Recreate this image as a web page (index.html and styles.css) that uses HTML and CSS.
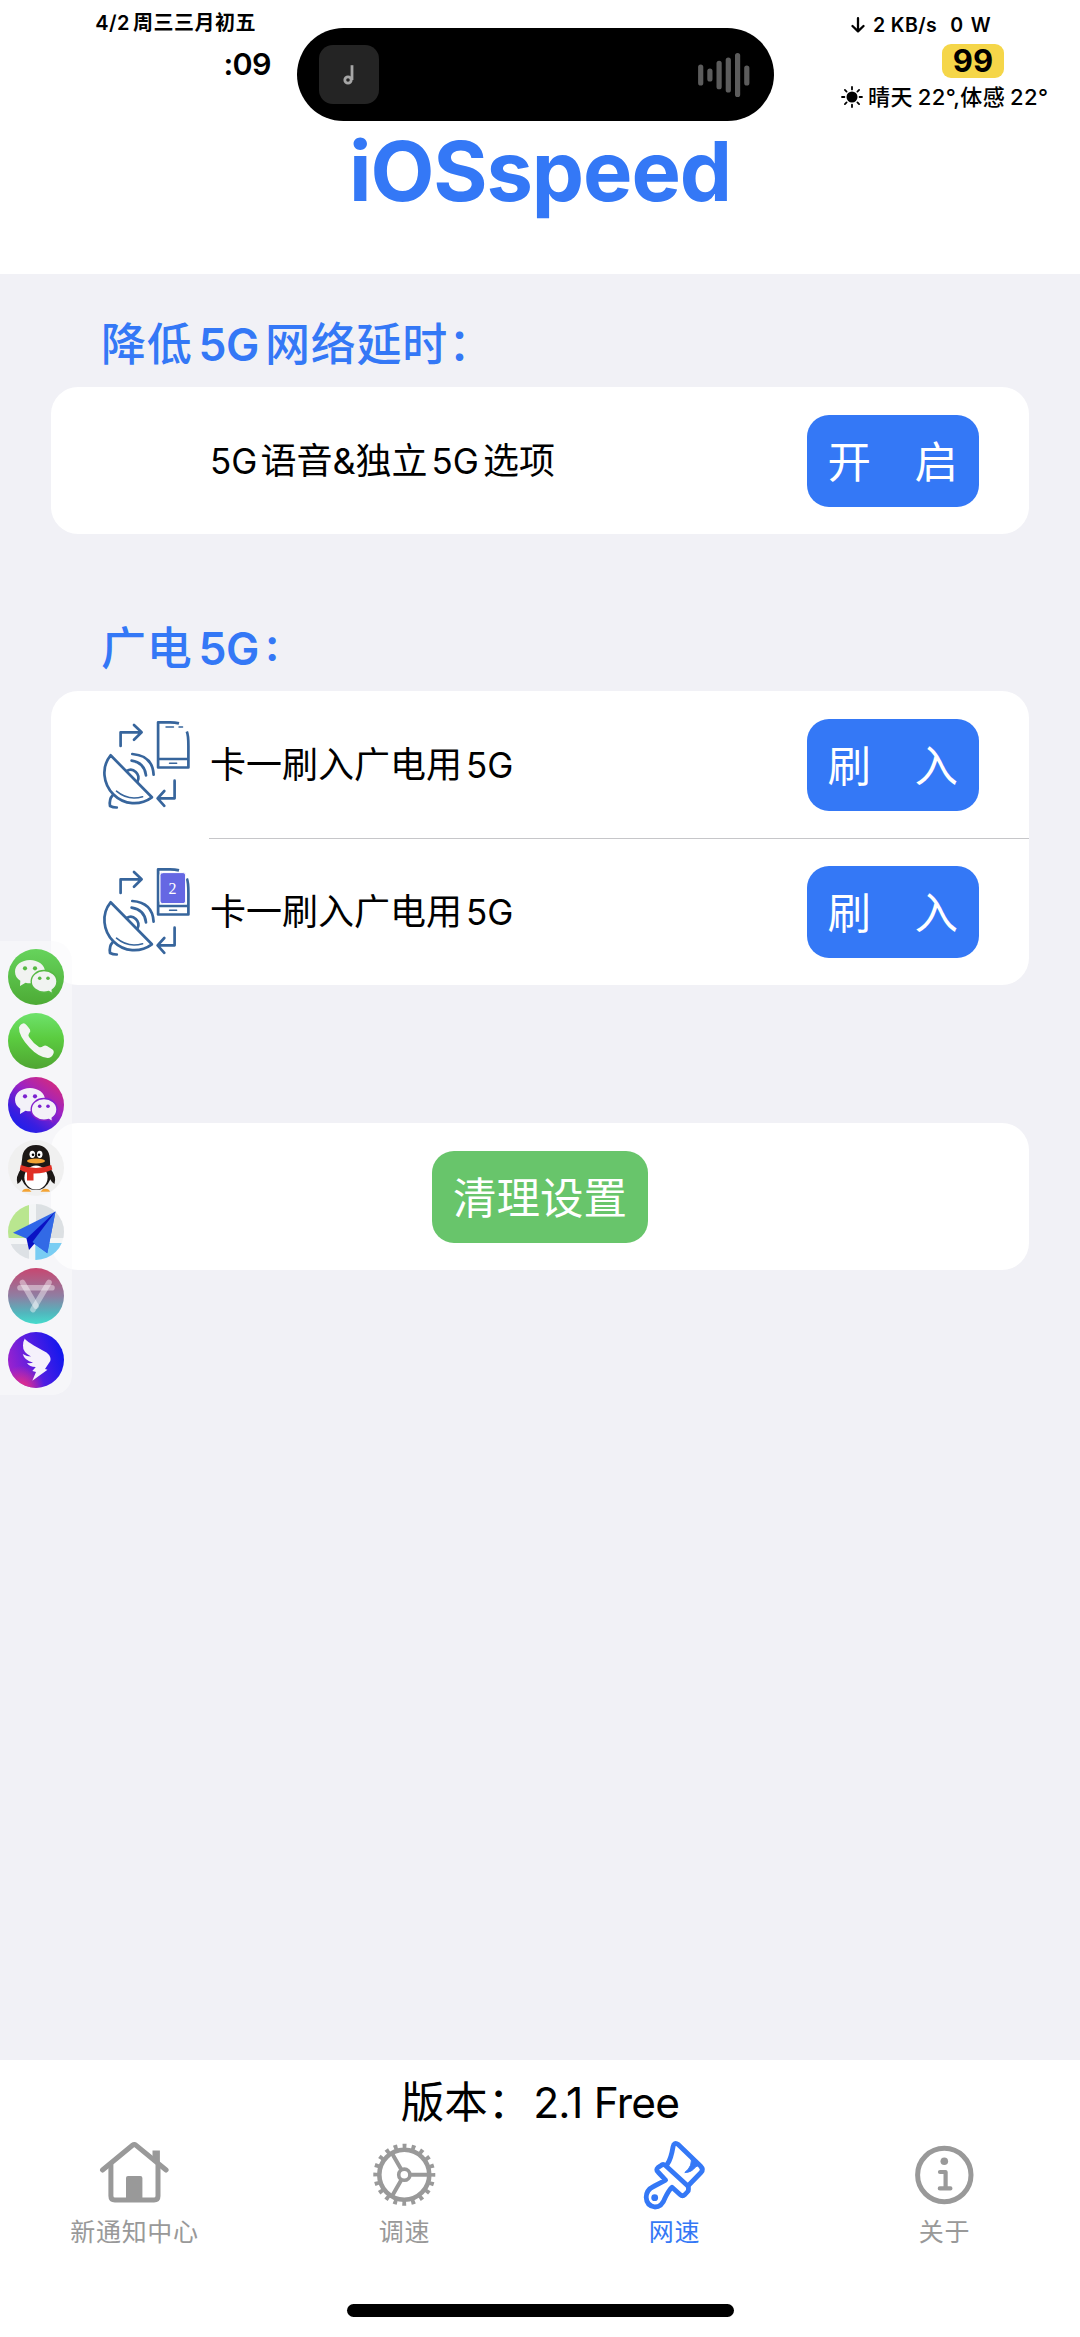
FILE: index.html
```html
<!DOCTYPE html>
<html lang="zh-CN">
<head>
    <meta charset="UTF-8">
    <title>iOSspeed</title>
    <link rel="stylesheet" href="styles.css">
</head>
<body>
    <header class="header">
        <div class="status-bar">
            <div class="status-left">
                <div class="date"><span class="day">4/2</span>周三三月初五</div>
                <div class="time">:09</div>
            </div>
            <div class="island">
                <div class="artwork">
                    <svg width="12" height="22" viewBox="0 0 12 22" fill="none" stroke="#a6a6a6">
                        <circle cx="5" cy="16" r="3.2" stroke-width="2.8"/>
                        <path d="M9 1.2V16" stroke-width="2.8"/>
                    </svg>
                </div>
                <svg width="52" height="46" viewBox="0 0 52 46" stroke="#5c5c5c" stroke-width="5.2" stroke-linecap="round">
                    <path d="M2.7 15V31M11.9 19V27M21.1 11.3V34.7M30.3 8V38M39.6 3.5V42.5M48.8 16V31"/>
                </svg>
            </div>
            <div class="status-right">
                <div class="net">
                    <svg width="14" height="16" viewBox="0 0 14 16" fill="none" stroke="#000" stroke-width="2.3" stroke-linecap="round" stroke-linejoin="round">
                        <path d="M7 1.2V14M1.5 9L7 14.3L12.5 9"/>
                    </svg>
                    <span>2 KB/s</span>
                    <span class="watt">0 W</span>
                </div>
                <div class="battery">99</div>
                <div class="weather">
                    <svg width="22" height="22" viewBox="0 0 22 22" stroke="#000" stroke-width="1.8" stroke-linecap="round">
                        <circle cx="11" cy="11" r="4.6"/>
                        <path d="M11 1V3.4M11 18.6V21M1 11H3.4M18.6 11H21M3.9 3.9L5.6 5.6M16.4 16.4L18.1 18.1M3.9 18.1L5.6 16.4M16.4 5.6L18.1 3.9"/>
                    </svg>
                    <span>晴天<span class="deg">22°,</span>体感<span class="deg">22°</span></span>
                </div>
            </div>
        </div>
        <h1>iOSspeed</h1>
    </header>

    <main>
        <h2>降低<span class="num">5G</span>网络延时：</h2>
        <div class="card">
            <div class="row">
                <div class="row-icon"></div>
                <div class="row-body">
                    <span class="label"><span class="lead">5G</span>语音&amp;独立<span class="num">5G</span>选项</span>
                    <button class="button primary">开　启</button>
                </div>
            </div>
        </div>

        <h2>广电<span class="num">5G</span><span class="colon">:</span></h2>
        <div class="card">
            <div class="row">
                <div class="row-icon">
                    <svg width="88" height="90" viewBox="0 0 88 90" fill="none" stroke="#37659c" stroke-width="2.7" stroke-linejoin="round" stroke-linecap="round">
                        <g id="dish">
                            <path d="M18.6 26V12.3H39M32 5L39.6 12.3L32 19.7"/>
                            <path d="M77 3.4Q73 2.3 68 2.3H56.1V47.5H86.4V26Q86.4 15 84.8 11.5M56.1 39H86.4" stroke-linecap="butt"/>
                            <path d="M64 7H71.5M77 7H80.6M67.5 43.3H74.7" stroke-width="1.4"/>
                            <path d="M8.6 35.3L49.9 77.3C38 86 22 85 11.5 74.5C1 64 -1 47 8.6 35.3Z"/>
                            <path d="M14.5 71.2Q26 81 40.6 76.7" stroke-width="1.6"/>
                            <path d="M24.8 51C31 47 39 54 35.5 61.5"/>
                            <path d="M29.6 40.7Q42.5 42.5 44 55.3M30.3 34Q50.5 35.5 51.6 54.6"/>
                            <path d="M10.5 75.5Q7 79 8 86Q11 87.6 14.8 87.5"/>
                            <path d="M72.6 60.7V78.3H56M62.3 71L55.6 78.3L62.3 85.8"/>
                        </g>
                    </svg>
                </div>
                <div class="row-body">
                    <span class="label">卡一刷入广电用<span class="num">5G</span></span>
                    <button class="button primary">刷　入</button>
                </div>
            </div>
            <div class="row">
                <div class="row-icon">
                    <svg width="88" height="90" viewBox="0 0 88 90" fill="none" stroke="#37659c" stroke-width="2.7" stroke-linejoin="round" stroke-linecap="round">
                        <use href="#dish"/>
                        <rect x="58" y="5.6" width="25.6" height="31" rx="2.5" fill="#6567e3" stroke="#fff" stroke-width="1"/>
                        <text class="sim" x="70.6" y="27" stroke="none">2</text>
                    </svg>
                </div>
                <div class="row-body">
                    <span class="label">卡一刷入广电用<span class="num">5G</span></span>
                    <button class="button primary">刷　入</button>
                </div>
            </div>
        </div>

        <div class="card clean-card">
            <button class="button success">清理设置</button>
        </div>
    </main>

    <footer>
        <div class="version">版本：<span>2.1 Free</span></div>
        <nav class="tabs">
            <a class="tab">
                <svg width="72" height="74" viewBox="0 0 72 74" fill="none" stroke="currentColor" stroke-width="5" stroke-linecap="round" stroke-linejoin="round">
                    <path d="M57.2 24V12.5" stroke-width="7.4" stroke-linecap="butt"/>
                    <path d="M3.5 32L33.5 7.3Q35.3 5.8 37.1 7.3L67.1 32"/>
                    <path d="M11.9 27V58Q11.9 62 15.9 62H55Q59 62 59 58V27"/>
                    <rect x="27" y="38" width="16.4" height="24" rx="2" fill="currentColor" stroke="none"/>
                </svg>
                <span>新通知中心</span>
            </a>
            <a class="tab">
                <svg width="72" height="74" viewBox="0 0 72 74" fill="none" stroke="currentColor" stroke-width="4">
                    <circle cx="35.3" cy="36.7" r="25" stroke-width="4.6"/>
                    <circle cx="35.3" cy="36.7" r="28.2" stroke-width="5.6" stroke-dasharray="3.8 5.06" stroke-dashoffset="1.9"/>
                    <circle cx="35.3" cy="36.7" r="5.6" stroke-width="3.6"/>
                    <path d="M42 36.7H60M32 31L22.8 15M32 42.4L22.8 58.4"/>
                </svg>
                <span>调速</span>
            </a>
            <a class="tab active">
                <svg width="72" height="74" viewBox="0 0 72 74" fill="none" stroke="currentColor" stroke-width="4.8" stroke-linecap="round" stroke-linejoin="round">
                    <path d="M28.4 26Q32 21 34 9Q35 3.5 39.2 6.5L61.5 28Q65 31.5 62 34.5L49.4 47.5"/>
                    <path d="M22 27.5Q24 25.4 26.5 27.5L48.6 47.8Q50 49.5 49.2 53L46 56.5Q43.5 58.8 41 56.5L33 49.3Q30 52 26 60Q23 69 15.8 69Q7.5 67.5 7.2 59.3Q7.3 52 14.5 48.5L26.6 42.2L19 34Q16.5 31.8 19 29.5Z"/>
                    <path d="M51.8 18.5Q54.5 28 45.8 34.5Q52.5 34.5 56.5 29L60 27Z" fill="currentColor" stroke-width="1"/>
                    <circle cx="15.7" cy="59.7" r="3.4" fill="currentColor" stroke="none"/>
                </svg>
                <span>网速</span>
            </a>
            <a class="tab">
                <svg width="72" height="74" viewBox="0 0 72 74" fill="none" stroke="currentColor" stroke-width="4.2" stroke-linecap="round" stroke-linejoin="round">
                    <circle cx="35.3" cy="37" r="26.7" stroke-width="5"/>
                    <circle cx="35.3" cy="23.2" r="3.8" fill="currentColor" stroke="none"/>
                    <path d="M31 34H36.6V50.4M30.8 50.4H41.4"/>
                </svg>
                <span>关于</span>
            </a>
        </nav>
        <div class="home-indicator"></div>
    </footer>

    <!-- floating app dock -->
    <aside class="dock">
        <svg viewBox="0 0 56 56">
            <defs>
                <linearGradient id="green" x2="0" y2="1"><stop stop-color="#66d35c"/><stop offset="1" stop-color="#4dab35"/></linearGradient>
                <linearGradient id="call" x2="0" y2="1"><stop stop-color="#6ee26c"/><stop offset=".45" stop-color="#5bcc40"/><stop offset="1" stop-color="#4fa532"/></linearGradient>
                <linearGradient id="neon" x1=".15" y1="1" x2=".85" y2="0"><stop stop-color="#1420f0"/><stop offset=".25" stop-color="#3a1ee0"/><stop offset=".6" stop-color="#9c22c4"/><stop offset="1" stop-color="#dc2c74"/></linearGradient>
                <linearGradient id="store" x2="0" y2="1"><stop stop-color="#c84670"/><stop offset=".5" stop-color="#8f7ea2"/><stop offset=".8" stop-color="#52b6bd"/><stop offset="1" stop-color="#45dccd"/></linearGradient>
                <linearGradient id="wing" x1="0" y1=".7" x2="1" y2=".4"><stop stop-color="#a022cc"/><stop offset=".45" stop-color="#5a1ee0"/><stop offset="1" stop-color="#1018ee"/></linearGradient>
                <radialGradient id="pink" cx=".25" cy="1" r=".4"><stop stop-color="#f03080"/><stop offset="1" stop-color="#f03080" stop-opacity="0"/></radialGradient>
                <clipPath id="round"><circle cx="28" cy="28" r="28"/></clipPath>
            </defs>
            <circle cx="28" cy="28" r="28" fill="url(#green)"/>
            <g fill="#f1f3f1">
                <path d="M22 11C13.5 11 7 16 7 22.7C7 26.5 9 29.6 12.3 31.7L12 37L17.5 33.7Q20 34.4 23 34.3C31 34 37 29 37 22.7C37 16 30 11 22 11Z"/>
                <path d="M36 21.5C29 21.5 23.2 26.3 23.2 32.4C23.2 38.5 29 43.2 36 43.2Q38.5 43.2 40.8 42.5L44.6 44.8L44.2 41C47 39 49 36 49 32.4C49 26.3 43 21.5 36 21.5Z" stroke="#57b944" stroke-width="1.4"/>
            </g>
            <g fill="#57b944"><circle cx="17" cy="19.3" r="2.1"/><circle cx="27" cy="19.3" r="2.1"/><circle cx="31.7" cy="29.3" r="1.8"/><circle cx="40" cy="29.3" r="1.8"/></g>
        </svg>
        <svg viewBox="0 0 56 56">
            <circle cx="28" cy="28" r="28" fill="url(#call)"/>
            <path d="M11 14.5Q12.5 10.5 15.8 10.2Q18 10.5 22 16.5Q23 18.3 21 20.5Q19.8 22 21 24Q25 30 31 34Q33 35 35 33.3Q37 31.8 39 33L44.5 36.5Q46.8 38.3 45 41.5Q43 45.5 38.5 44.8Q30 43.5 21.5 34.5Q10.5 22.5 11 14.5Z" fill="#f2f5f1"/>
        </svg>
        <svg viewBox="0 0 56 56">
            <circle cx="28" cy="28" r="28" fill="url(#neon)"/>
            <g fill="#f3f1f8">
                <path d="M22 11C13.5 11 7 16 7 22.7C7 26.5 9 29.6 12.3 31.7L12 37L17.5 33.7Q20 34.4 23 34.3C31 34 37 29 37 22.7C37 16 30 11 22 11Z"/>
                <path d="M36 21.5C29 21.5 23.2 26.3 23.2 32.4C23.2 38.5 29 43.2 36 43.2Q38.5 43.2 40.8 42.5L44.6 44.8L44.2 41C47 39 49 36 49 32.4C49 26.3 43 21.5 36 21.5Z" stroke="#8422cc" stroke-width="1.4"/>
            </g>
            <g fill="#7c22d0"><circle cx="17" cy="19.3" r="2.1"/><circle cx="27" cy="19.3" r="2.1"/><circle cx="31.7" cy="29.3" r="1.8"/><circle cx="40" cy="29.3" r="1.8"/></g>
        </svg>
        <svg viewBox="0 0 56 56">
            <circle cx="28" cy="28" r="28" fill="#f0f0f0"/>
            <path d="M13.5 28Q7 37 9.5 44Q12 43 14 39M42 28Q49 37 46.5 44Q44 43 42 39" fill="#1c1816"/>
            <path d="M28 5C19 5 14.5 11 14.2 18L13.3 25Q11.5 34 14 40Q18 50 28 50Q38 50 42 40Q44.5 34 42.2 25L41.8 18C41.5 11 37 5 28 5Z" fill="#1c1816"/>
            <ellipse cx="28" cy="37.5" rx="11.6" ry="12" fill="#fff"/>
            <path d="M12.8 25Q28 31 43.2 25L44.3 29.5Q36 33.8 25.5 33.5V40.5H19V32.5Q14 31.5 11.8 29.5Z" fill="#e02f24"/>
            <g fill="#fff"><ellipse cx="24.3" cy="14.3" rx="2.8" ry="3.6"/><ellipse cx="31.7" cy="14.3" rx="2.8" ry="3.6"/></g>
            <circle cx="25" cy="14.8" r="1.3"/><circle cx="31" cy="14.8" r="1.3"/>
            <ellipse cx="28" cy="21" rx="9" ry="2.5" fill="#f3a334"/>
            <path d="M14 51.8Q15 48 21 49L23.5 51.8ZM32.5 51.8L35 49Q41 48 42 51.8Z" fill="#f3a334"/>
        </svg>
        <svg viewBox="0 0 56 56">
            <g clip-path="url(#round)">
                <rect width="56" height="56" fill="#f3f5f6"/>
                <rect width="21" height="34" fill="#b9e68f"/>
                <rect x="28" width="28" height="34" fill="#dce0e3"/>
                <rect y="40" width="21" height="16" fill="#dde1e5"/>
                <rect x="27.3" y="39" width="29" height="17" fill="#79cdf3"/>
            </g>
            <path d="M47.5 7.5L5 28.7L18.5 34.5L39.3 49.3Z" fill="#2f66e8"/>
            <path d="M47.5 7.5L18.5 34.5L21 46L26.2 40Z" fill="#0a12c4"/>
            <path d="M47.5 7.5L24.5 38L39.3 49.3Z" fill="#326ae6"/>
        </svg>
        <svg viewBox="0 0 56 56">
            <circle cx="28" cy="28" r="28" fill="url(#store)"/>
            <g stroke="#fff" stroke-opacity=".42" stroke-width="5.6" stroke-linecap="round">
                <path d="M12 19.8H44"/><path d="M14.5 14.5L28 38"/><path d="M41 14.5L25 41.5"/>
            </g>
        </svg>
        <svg viewBox="0 0 56 56">
            <circle cx="28" cy="28" r="28" fill="url(#wing)"/>
            <circle cx="28" cy="28" r="28" fill="url(#pink)"/>
            <path d="M16.8 6.5Q18 9.5 38.5 20.5Q43.5 24.5 42.3 29L37 37L39.5 37.8L24.3 48.8L28 40L24.3 39L27.8 35Q21.5 34.8 19 31Q23 31.5 25 30.5Q16.5 28.5 14.7 22Q19 24.5 23 24.5Q14.5 20 15 13.5Q15 9.5 16.8 6.5Z" fill="#f5f1fb"/>
        </svg>
    </aside>
</body>
</html>
```

FILE: styles.css
```css
* {
    box-sizing: border-box;
}
body {
    margin: 0;
    width: 1080px;
    height: 2337px;
    display: flex;
    flex-direction: column;
    position: relative;
    overflow: hidden;
    font-family: Inter, "Noto Sans CJK SC", sans-serif;
    background-color: #f1f1f6;
    color: #000;
}
h1, h2 {
    margin: 0;
    color: #3478f6;
}
.header {
    height: 274px;
    background: white;
}
.status-bar {
    height: 121px;
    display: grid;
    grid-template-columns: 297px 477px 1fr;
}
.status-left {
    padding: 11px 26px 0 0;
    text-align: right;
}
.date {
    height: 28px;
    padding-right: 15px;
    font-size: 20px;
    line-height: 24px;
    font-weight: 600;
    letter-spacing: 0.5px;
}
.day {
    margin-right: 3px;
}
.time {
    font-size: 30.5px;
    line-height: 50px;
    font-weight: 600;
    letter-spacing: -0.6px;
}
.island {
    margin-top: 28px;
    height: 93px;
    padding: 0 24px 0 22px;
    display: flex;
    align-items: center;
    justify-content: space-between;
    background: #000;
    border-radius: 47px;
}
.artwork {
    width: 60px;
    height: 59px;
    display: flex;
    align-items: center;
    justify-content: center;
    background: #242424;
    border-radius: 14px;
}
.status-right {
    padding: 12px 0 0 67px;
}
.net {
    height: 32px;
    padding-left: 10px;
    display: flex;
    align-items: flex-start;
    font-size: 19.5px;
    line-height: 26px;
    font-weight: 600;
    letter-spacing: 0.4px;
}
.net svg {
    margin: 5px 8px 0 0;
}
.watt {
    margin-left: 13px;
    word-spacing: 2px;
}
.battery {
    width: 62px;
    height: 34px;
    margin-left: 101px;
    background: #f5d649;
    border-radius: 9px;
    font-size: 31px;
    line-height: 34px;
    font-weight: 700;
    text-align: center;
}
.weather {
    display: flex;
    align-items: center;
    gap: 5px;
    font-size: 22px;
    line-height: 38px;
    font-weight: 500;
    letter-spacing: 0.4px;
    white-space: nowrap;
}
.weather .deg {
    margin-left: 5px;
}
h1 {
    font-size: 83px;
    line-height: 100px;
    font-weight: 700;
    letter-spacing: -1.1px;
    text-align: center;
}
main {
    flex: 1;
    padding: 35px 51px 0;
}
h2 {
    padding: 2px 0 0 50px;
    height: 78px;
    font-size: 45px;
    line-height: 68px;
    font-weight: 500;
    letter-spacing: 0.8px;
}
.num {
    margin: 0 4px;
}
h2 .num {
    margin: 0 6px;
    font-size: 44.5px;
    font-weight: 600;
    letter-spacing: -0.5px;
}
.colon {
    position: relative;
    top: -4px;
    font-weight: 600;
}
.card {
    margin-bottom: 79px;
    background: white;
    border-radius: 27px;
}
.row {
    height: 147px;
    display: flex;
}
.row-icon {
    width: 158px;
    padding: 29px 0 0 51px;
}
.row-body {
    flex: 1;
    display: flex;
    align-items: center;
    justify-content: space-between;
    padding-right: 50px;
}
.row + .row .row-body {
    border-top: 1px solid #c6c6c9;
}
.label {
    padding-left: 1px;
    font-size: 36px;
    line-height: 54px;
}
.label .num, .lead {
    font-size: 35px;
}
.lead {
    margin-right: 3px;
}
.sim {
    font-family: "Liberation Serif", serif;
    font-size: 16px;
    text-anchor: middle;
    fill: white;
}
.button {
    height: 92px;
    padding: 0 21px 3px;
    border: none;
    border-radius: 22px;
    font-family: inherit;
    font-size: 43.5px;
    font-weight: 400;
    color: white;
    cursor: pointer;
}
.primary {
    background-color: #3478f6;
}
.success {
    background-color: #68c56b;
}
.clean-card {
    height: 147px;
    margin-top: 138px;
    display: flex;
    align-items: center;
    justify-content: center;
}
footer {
    height: 277px;
    background: white;
}
.version {
    height: 78px;
    font-size: 43.5px;
    line-height: 84px;
    text-align: center;
}
.version span {
    margin-left: 2px;
    font-size: 42.5px;
    letter-spacing: -0.8px;
}
.tabs {
    display: grid;
    grid-template-columns: repeat(4, 1fr);
    height: 166px;
}
.tab {
    display: flex;
    flex-direction: column;
    align-items: center;
    gap: 1px;
    font-size: 25px;
    line-height: 38px;
    letter-spacing: 0.7px;
    color: #999;
}
.tab span {
    margin-right: 1px;
}
.tab.active {
    color: #3478f6;
}
.home-indicator {
    width: 387px;
    height: 13px;
    margin: 0 auto;
    background: #000;
    border-radius: 7px;
}
.dock {
    position: absolute;
    left: 0;
    top: 941px;
    width: 72px;
    height: 454px;
    padding: 8px;
    display: flex;
    flex-direction: column;
    gap: 7.8px;
    background: rgba(250, 250, 251, 0.6);
    border-radius: 0 20px 20px 0;
}
.dock svg {
    width: 56px;
    height: 56px;
    flex: none;
}
```
